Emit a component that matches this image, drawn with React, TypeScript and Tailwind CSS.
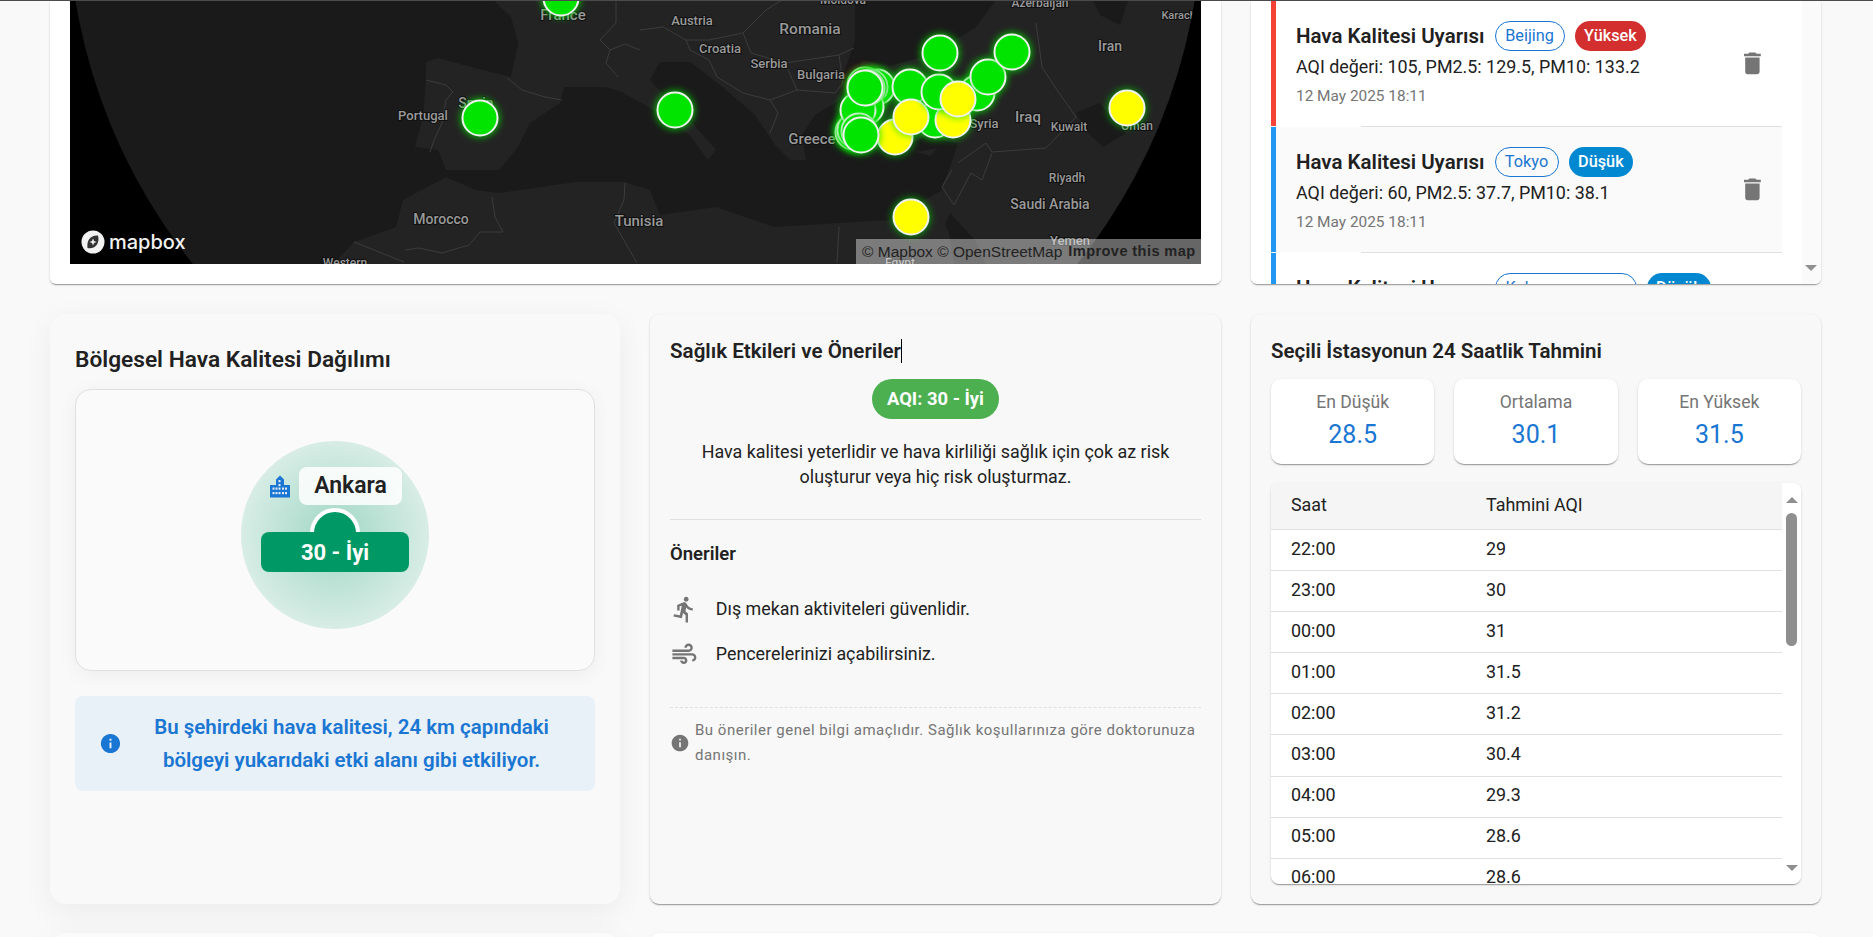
import React from "react";
import { MdDelete, MdDirectionsRun, MdAir, MdInfo } from "react-icons/md";

const muiShadow = "shadow-[0_2px_1px_-1px_rgba(0,0,0,0.2),0_1px_1px_0_rgba(0,0,0,0.14),0_1px_3px_0_rgba(0,0,0,0.12)]";

const G = "#00e400";
const Y = "#ffff00";
const markers: [number, number, string][] = [
  [865, 85, "#7e0023"], [561, -2, G], [480, 118, G], [675, 110, G], [1127, 108, Y], [911, 217, Y],
  [877, 87, G], [853, 132, G], [855, 130, G], [870, 87, G], [866, 107, G], [858, 110, G], [859, 131, G],
  [895, 137, Y], [910, 87, G], [977, 93, G], [935, 120, G], [911, 117, Y], [953, 120, Y], [939, 92, G],
  [861, 135, G], [867, 88, G], [865, 88, G], [940, 53, G], [988, 77, G], [1012, 52, G], [958, 99, Y],
];

const labels: [string, number, number, number][] = [
  ["France", 563, 20, 15], ["Portugal", 423, 120, 13], ["Spain", 476, 108, 14], ["Morocco", 441, 224, 14],
  ["Western", 345, 267, 12], ["Tunisia", 639, 226, 15], ["Austria", 692, 25, 13], ["Romania", 810, 34, 15.5],
  ["Croatia", 720, 53, 13], ["Serbia", 769, 68, 13], ["Bulgaria", 821, 79, 13], ["Greece", 812, 144, 15],
  ["Iraq", 1028, 122, 15], ["Kuwait", 1069, 131, 12], ["Riyadh", 1067, 182, 12], ["Saudi Arabia", 1050, 209, 14],
  ["Yemen", 1070, 245, 13], ["Iran", 1110, 51, 14], ["Karachi", 1180, 19, 11], ["Azerbaijan", 1040, 7, 12],
  ["Oman", 1137, 130, 12], ["Syria", 984, 128, 13], ["Egypt", 900, 267, 12], ["Moldova", 843, 4, 12],
];

const borders = [
  "616,0 616,23 600,40 610,50 606,63 618,77", "610,50 625,44 640,50",
  "640,30 663,27 686,40 709,40 743,33 766,10 782,0", "686,40 690,50 709,60 717,77 743,93 770,100 778,113 770,133",
  "743,33 751,53 785,63 839,55 854,48", "785,63 797,90 770,100", "797,90 835,93", "839,55 843,83 835,93",
  "426,80 446,85 453,92 446,100 442,123 434,140 430,152", "507,78 522,90 545,97 562,100",
  "492,197 495,217 503,232 480,232 469,245 442,253 419,248 405,250", "354,242 404,262", "625,183 624,200 614,223 637,263",
  "958,163 986,143 992,152 1046,148 1076,117", "1036,23 1042,67 1057,90 1076,117", "839,227 837,263",
  "954,205 942,187 952,170", "954,205 971,173 982,180 992,153",
];

function MapView() {
  return (
    <div className="relative h-[263px] w-[1131px] overflow-hidden bg-black">
      <svg viewBox="70 1 1131 263" width="1131" height="263" className="block">
        <defs>
          <clipPath id="globe"><circle cx="635" cy="-91" r="567" /></clipPath>
          <filter id="glowG" x="-60%" y="-60%" width="220%" height="220%"><feGaussianBlur stdDeviation="3.5" /></filter>
        </defs>
        <g clipPath="url(#globe)">
          <rect x="0" y="-10" width="1300" height="300" fill="#1a1a1a" />
          <path fill="#232323" d="M488,-5 L511,17 L518,43 L511,77 L475,68 L438,58 L426,62 L426,80 L423,117 L415,147 L438,150 L446,170 L499,170 L518,147 L530,123 L560,103 L564,87 L605,87 L622,92 L650,108 L690,135 L708,160 L716,150 L690,120 L668,100 L650,80 L660,62 L690,62 L720,85 L755,115 L775,145 L790,160 L806,160 L802,135 L815,115 L840,100 L845,70 L855,40 L855,-5 Z" />
          <path fill="#232323" d="M862,60 L889,66 L930,55 L975,28 L1000,-5 L1300,-5 L1300,300 L990,300 L985,263 L965,263 L945,225 L942,187 L950,167 L958,143 L925,137 L900,148 L860,150 L845,125 L850,95 Z" />
          <path fill="#232323" d="M300,300 L354,242 L396,227 L403,200 L446,177 L476,190 L499,193 L576,182 L625,182 L650,190 L660,215 L716,207 L774,227 L839,223 L889,220 L942,190 L960,300 Z" />
          <path fill="#1a1a1a" d="M1076,113 L1099,103 L1126,133 L1103,147 L1088,133 Z" />
          <path fill="#1a1a1a" d="M1090,-5 L1130,-5 L1120,25 L1100,15 Z" />
          <path fill="#1a1a1a" d="M950,213 L975,240 L985,263 L965,263 L945,225 Z" />
          <path fill="#232323" d="M915,152 L938,148 L930,156 Z" />
          {borders.map((b, i) => (
            <polyline key={i} points={b} fill="none" stroke="#3c3c3c" strokeWidth="1" />
          ))}
          {labels.map(([t, x, y, s]) => (
            <text key={t} x={x} y={y} textAnchor="middle" fontFamily="Roboto, sans-serif" fontWeight="500" fontSize={s} fill="#9a9a9a" stroke="#101010" strokeWidth="2" paintOrder="stroke">{t}</text>
          ))}
        </g>
        {markers.map(([x, y, c], i) => (
          <g key={i}>
            <circle cx={x} cy={y} r="19.5" fill={c === Y ? G : c} opacity={c === Y ? 0.6 : 0.8} filter="url(#glowG)" />
            <circle cx={x} cy={y} r="17.5" fill={c} stroke="#f0f0f0" strokeWidth="2" />
          </g>
        ))}
      </svg>
      <div className="absolute bottom-[10px] left-[11px] flex items-center gap-[4px]">
        <svg viewBox="0 0 24 24" width="24" height="24">
          <circle cx="12" cy="12" r="11.5" fill="#f2f2f2" />
          <path d="M6.5 18 C5.5 10 9.5 5 17 5.5 C19 13 14.5 19.5 6.5 18 Z" fill="#333333" />
          <path d="M12 8.5 L13 11 L15.5 12 L13 13 L12 15.5 L11 13 L8.5 12 L11 11 Z" fill="#f2f2f2" />
        </svg>
        <span className="font-['Inter',sans-serif] text-[20px] leading-[24px] font-medium text-[#f2f2f2]">mapbox</span>
      </div>
      <div className="absolute right-0 bottom-0 flex h-[25px] w-[345px] items-center bg-[rgba(255,255,255,0.4)] pl-[6px] font-['Liberation_Sans',sans-serif] text-[15.5px] whitespace-nowrap text-[#222222]">
        <span>© Mapbox © OpenStreetMap</span>
        <span className="ml-[6px] text-[14.6px] font-bold tracking-[0.4px] text-[#222222]">Improve this map</span>
      </div>
    </div>
  );
}

function Alert({ city, sev, sevBg, bar, text, bg, cityW }: { city: string; sev: string; sevBg: string; bar: string; text: string; bg: string; cityW: string }) {
  return (
    <div className={`flex h-[125px] shrink-0 items-center justify-between border-l-[5px] pr-[15px] pl-[20px] ${bar} ${bg}`}>
      <div className="flex h-full flex-col pt-[20px]">
        <div className="flex h-[30px] items-center">
          <span className="text-[20.5px] leading-[30px] font-semibold text-[#212121]">Hava Kalitesi Uyarısı</span>
          <span className={`ml-[10px] flex h-[30px] items-center justify-center rounded-full border border-[#1976d2] text-[16.3px] text-[#1976d2] ${cityW}`}>{city}</span>
          <span className={`ml-[10px] flex h-[30px] items-center rounded-full px-[9.5px] text-[16.3px] font-medium text-white ${sevBg}`}>{sev}</span>
        </div>
        <div className="mt-[3px] text-[17.9px] leading-[26px] text-[#212121]">{text}</div>
        <div className="mt-[3px] text-[15.4px] leading-[26px] text-[#757575]">12 May 2025 18:11</div>
      </div>
      <MdDelete size={28.8} color="#757575" />
    </div>
  );
}

function BuildingIcon() {
  return (
    <svg viewBox="0 0 20 23" width="20" height="23" className="shrink-0">
      <path fill="#1976d2" d="M0 10 H6 V4.5 L10 0.5 L14 4.5 V10 H20 V22.5 H0 Z" />
      {[[8.5, 5], [8.5, 9], [2.5, 12.5], [8.5, 12.5], [15, 12.5], [2.5, 17], [8.5, 17], [15, 17], [5.5, 12.5], [12, 12.5], [5.5, 17], [12, 17]].map(([x, y], i) => (
        <rect key={i} x={x} y={y} width="2" height="2.2" fill="#dfeaf5" />
      ))}
    </svg>
  );
}

function Stat({ label, value }: { label: string; value: string }) {
  return (
    <div className={`flex h-[85px] flex-1 flex-col items-center rounded-[10px] bg-white pt-[10px] ${muiShadow}`}>
      <span className="text-[17.6px] leading-[26px] text-[#757575]">{label}</span>
      <span className="mt-[3px] text-[25px] leading-[34px] text-[#1976d2]">{value}</span>
    </div>
  );
}

const rows = [
  ["22:00", "29"], ["23:00", "30"], ["00:00", "31"], ["01:00", "31.5"], ["02:00", "31.2"],
  ["03:00", "30.4"], ["04:00", "29.3"], ["05:00", "28.6"], ["06:00", "28.6"],
];

function ForecastTable() {
  return (
    <div className={`mt-[19px] flex h-[401px] overflow-hidden rounded-[8px] bg-white ${muiShadow}`}>
      <div className="w-[511px] shrink-0">
        <div className="flex h-[47px] items-center border-b border-[#e0e0e0] bg-[#f5f5f5] pb-[2px] text-[17.9px] text-[#212121]">
          <span className="w-[215px] pl-[20px]">Saat</span>
          <span>Tahmini AQI</span>
        </div>
        {rows.map(([h, v]) => (
          <div key={h} className="flex h-[41.1px] items-center border-b border-[#e0e0e0] pb-[2px] text-[17.9px] text-[#212121]">
            <span className="w-[215px] pl-[20px]">{h}</span>
            <span>{v}</span>
          </div>
        ))}
      </div>
      <div className="relative flex-1 bg-white">
        <div className="absolute top-[14px] left-[4px] h-0 w-0 border-x-[6.5px] border-b-[6.5px] border-x-transparent border-b-[#8f8f8f]" />
        <div className="absolute top-[30px] left-[4px] h-[133px] w-[11px] rounded-full bg-[#8f8f8f]" />
        <div className="absolute bottom-[13px] left-[4px] h-0 w-0 border-x-[6.5px] border-t-[6.5px] border-x-transparent border-t-[#8f8f8f]" />
      </div>
    </div>
  );
}

export default function App() {
  return (
    <div className="h-[937px] w-[1873px] overflow-hidden border-t border-[#4a4a4f] bg-[#f9f9f9] px-[50px] font-['Roboto',sans-serif]">
      <div className="flex h-[283px] gap-[30px]">
        <div className={`w-[1171px] rounded-b-[6px] bg-white px-[20px] ${muiShadow}`}>
          <MapView />
        </div>
        <div className={`flex w-[570px] overflow-hidden rounded-b-[6px] bg-white pl-[20px] ${muiShadow}`}>
          <div className="flex w-[511px] shrink-0 flex-col">
            <Alert city="Beijing" cityW="w-[70px]" sev="Yüksek" sevBg="bg-[#d32f2f]" bar="border-[#f44336]" bg="bg-white" text="AQI değeri: 105, PM2.5: 129.5, PM10: 133.2" />
            <div className="ml-[90px] h-px shrink-0 bg-[#e0e0e0]" />
            <Alert city="Tokyo" cityW="w-[64px]" sev="Düşük" sevBg="bg-[#0288d1]" bar="border-[#2196f3]" bg="bg-[#fafafa]" text="AQI değeri: 60, PM2.5: 37.7, PM10: 38.1" />
            <div className="ml-[90px] h-px shrink-0 bg-[#e0e0e0]" />
            <Alert city="Kahramanmaraş" cityW="w-[142px]" sev="Düşük" sevBg="bg-[#0288d1]" bar="border-[#2196f3]" bg="bg-white" text="AQI değeri: 55, PM2.5: 30.1, PM10: 32.4" />
          </div>
          <div className="relative ml-[20px] flex-1 bg-[#fafafa]">
            <div className="absolute bottom-[13px] left-[3px] h-0 w-0 border-x-[6.5px] border-t-[6.5px] border-x-transparent border-t-[#8f8f8f]" />
          </div>
        </div>
      </div>

      <div className="mt-[30px] flex h-[590px] gap-[30px]">
        <div className="w-[570px] rounded-[16px] bg-[#f9f9f9] px-[25px] shadow-[0_8px_32px_rgba(0,0,0,0.06)]">
          <h2 className="mt-[31px] text-[22.7px] leading-[30px] font-semibold text-[#212121]">Bölgesel Hava Kalitesi Dağılımı</h2>
          <div className="mt-[14px] flex h-[282px] items-center justify-center rounded-[16px] border border-[#e0e0e0] bg-[#fafafa] pt-[10px] shadow-[0_4px_20px_rgba(0,0,0,0.05)]">
            <div className="relative flex h-[188px] w-[188px] flex-col items-center rounded-full bg-[radial-gradient(circle,rgba(0,153,102,0.36)_0%,rgba(0,153,102,0.14)_70%,rgba(0,153,102,0.11)_100%)]">
              <div className="mt-[26px] ml-[2px] flex items-center gap-[9px]">
                <BuildingIcon />
                <span className="flex h-[38px] w-[103px] items-center justify-center rounded-[8px] bg-[rgba(255,255,255,0.85)] text-[23px] font-semibold text-[#212121]">Ankara</span>
              </div>
              <div className="mt-[3px] h-[50px] w-[50px] rounded-full border-4 border-white bg-[#009966]" />
              <div className="absolute top-[91px] left-[20px] flex h-[40px] w-[148px] items-center justify-center rounded-[8px] bg-[#009966] text-[22px] font-bold text-white">30 - İyi</div>
            </div>
          </div>
          <div className="mt-[25px] flex h-[95px] items-center rounded-[8px] bg-[#e8f0f8] pr-[22px] pl-[24px]">
            <MdInfo size={23} color="#1976d2" className="shrink-0" />
            <p className="flex-1 pl-[8px] text-center text-[20.5px] leading-[33px] font-semibold text-[#1976d2]">Bu şehirdeki hava kalitesi, 24 km çapındaki bölgeyi yukarıdaki etki alanı gibi etkiliyor.</p>
          </div>
        </div>

        <div className={`w-[571px] rounded-[9px] bg-[#f8f8f8] px-[20px] ${muiShadow}`}>
          <h2 className="mt-[23px] h-[28px] text-[20.6px] leading-[28px] font-semibold text-[#212121]"><span className="border-r border-black">Sağlık Etkileri ve Öneriler</span></h2>
          <div className="mt-[14px] flex justify-center">
            <span className="flex h-[40px] w-[127px] items-center justify-center rounded-full bg-[#4caf50] text-[18.4px] font-bold text-white">AQI: 30 - İyi</span>
          </div>
          <p className="mt-[20px] text-center text-[17.9px] leading-[25px] text-[#212121]">Hava kalitesi yeterlidir ve hava kirliliği sağlık için çok az risk<br />oluşturur veya hiç risk oluşturmaz.</p>
          <div className="mt-[30px] h-px bg-[#e0e0e0]" />
          <h3 className="mt-[21px] text-[18.5px] leading-[26px] font-semibold text-[#212121]">Öneriler</h3>
          <div className="mt-[20px] flex h-[45px] items-center gap-[17px]">
            <MdDirectionsRun size={28.8} color="#757575" />
            <span className="text-[17.85px] text-[#212121]">Dış mekan aktiviteleri güvenlidir.</span>
          </div>
          <div className="flex h-[45px] items-center gap-[17px]">
            <MdAir size={28.8} color="#757575" />
            <span className="text-[17.85px] text-[#212121]">Pencerelerinizi açabilirsiniz.</span>
          </div>
          <div className="mt-[30px] border-t border-dashed border-[#e0e0e0]" />
          <div className="mt-[10px] flex items-center gap-[5px]">
            <MdInfo size={20} color="#757575" className="shrink-0" />
            <p className="text-[15px] leading-[25px] tracking-[0.5px] text-[#757575]">Bu öneriler genel bilgi amaçlıdır. Sağlık koşullarınıza göre doktorunuza danışın.</p>
          </div>
        </div>

        <div className={`w-[570px] rounded-[9px] bg-[#f8f8f8] px-[20px] ${muiShadow}`}>
          <h2 className="mt-[23px] h-[28px] text-[20.5px] leading-[28px] font-semibold text-[#212121]">Seçili İstasyonun 24 Saatlik Tahmini</h2>
          <div className="mt-[14px] flex gap-[20px]">
            <Stat label="En Düşük" value="28.5" />
            <Stat label="Ortalama" value="30.1" />
            <Stat label="En Yüksek" value="31.5" />
          </div>
          <ForecastTable />
        </div>
      </div>

      <div className="mt-[29px] flex h-[60px] gap-[30px]">
        <div className="w-[570px] rounded-[16px] bg-[#fbfbfb] shadow-[0_8px_32px_rgba(0,0,0,0.06)]" />
        <div className={`w-[1171px] rounded-[9px] bg-white ${muiShadow}`} />
      </div>
    </div>
  );
}
